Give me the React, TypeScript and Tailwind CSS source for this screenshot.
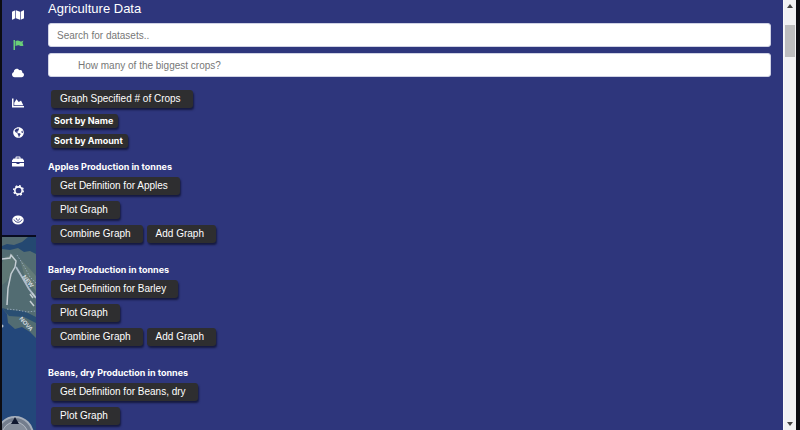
import { FaMap, FaCloud, FaChartArea, FaGlobeAmericas } from "react-icons/fa";
import type { ReactNode } from "react";

function FlagIcon() {
  return (
    <svg viewBox="0 0 22 22" className="size-[11px]" fill="currentColor">
      <path d="M1 2H4V22H1Z" />
      <path d="M5 4C8 2 12 3 14 4.500S18 5 21 3L19 8 21 13C18 15 15 14 13 13S9 12 5 14Z" />
    </svg>
  );
}

function BriefcaseIcon() {
  return (
    <svg viewBox="0 0 24 22" className="h-[11px] w-3" fill="currentColor">
      <path fillRule="evenodd" d="M7 5V3Q7 1 9 1H15Q17 1 17 3V5H21L24 9V12H0V9L3 5ZM9 5H15V3H9Z" />
      <path d="M0 14H9V16H15V14H24V20Q24 21 23 21H1Q0 21 0 20Z" />
    </svg>
  );
}

function GearIcon() {
  return (
    <svg viewBox="0 0 24 24" className="size-[11px]" fill="none" stroke="currentColor">
      <circle cx="12" cy="12" r="8" strokeWidth="3.500" />
      <circle cx="12" cy="12" r="10.5" strokeWidth="3" strokeDasharray="4.1 4.147" />
    </svg>
  );
}

function EyeIcon() {
  return (
    <svg viewBox="0 0 24 20" className="h-2.5 w-3" fill="none" stroke="currentColor">
      <ellipse cx="12" cy="10" rx="11.500" ry="9" fill="currentColor" stroke="none" />
      <path d="M4 9C6 13 9 14.500 12 14.500S18 13 20 9" stroke="#2e367c" strokeWidth="1.800" />
      <path d="M8.500 6C8.500 9 10 10.500 12 10.500S15 9 15 7" stroke="#2e367c" strokeWidth="1.600" />
    </svg>
  );
}

const navItems: { label: string; icon: ReactNode; active?: boolean }[] = [
  { label: "Map", icon: <FaMap className="size-3" /> },
  { label: "Flags", icon: <FlagIcon />, active: true },
  { label: "Weather", icon: <FaCloud className="size-3" /> },
  { label: "Charts", icon: <FaChartArea className="size-3" /> },
  { label: "World", icon: <FaGlobeAmericas className="size-[11px]" /> },
  { label: "Projects", icon: <BriefcaseIcon /> },
  { label: "Settings", icon: <GearIcon /> },
  { label: "View", icon: <EyeIcon /> },
];

function MapPreview() {
  return (
    <svg viewBox="0 0 34 193" preserveAspectRatio="xMidYMin slice" className="min-h-0 w-full flex-1">
      <rect width="34" height="193" fill="#23477a" />
      <path d="M0 0H34V101L28 95 20 90 13 92 6 86 5 77 0 71Z" fill="#526c72" />
      <path d="M0 0H34V17L28 14 22 15 16 11 8 13 0 12Z" fill="#244871" />
      <path d="M0 0H26L20 5 12 8 5 7 0 9Z" fill="#536a70" />
      <path d="M3 20L11 17 13 25 9 38 4 45 0 48V26Z" fill="#5e7775" />
      <path d="M18 22L28 32 34 39V54L23 41Z" fill="#647b78" />
      <path d="M0 71L8 73 22 74 34 80V86L22 80 7 79Z" fill="#294e73" />
      <path d="M0 22L8 21 9 18 14 24 13 30 9 37 6 51 5 68" fill="none" stroke="#c4cdd3" strokeWidth="1.500" />
      <path d="M14 30L20 40 27 52 34 61" fill="none" stroke="#aebcc9" strokeWidth="1.800" />
      <path d="M15 18L22 29 28 40 34 46M5 72L15 73 25 75 34 74" fill="none" stroke="#8fa3b7" strokeDasharray="1.500 1.500" />
      <g fill="#d5dce2" fontFamily="Liberation Sans, Arial, sans-serif" fontSize="6" fontWeight="700">
        <text x="20" y="40" transform="rotate(52 20 40)">NEW</text>
        <text x="17" y="82" transform="rotate(48 17 82)">NOVA</text>
      </g>
      <path d="M28 57L31 61M30 56L33 60M28 64L32 69" stroke="#c4cdd3" strokeWidth="1.500" />
      <circle cx="0" cy="89" r="1.500" fill="#b7c4d3" />
      <circle cx="13" cy="198" r="18" fill="#737d8d" stroke="#a6afbc" strokeWidth="2" />
      <circle cx="13" cy="198" r="13" fill="#858e9c" stroke="#b1b8c3" />
      <path d="M13 180L9 187H17Z" fill="#10182f" />
    </svg>
  );
}

function ActionButton({ children }: { children: ReactNode }) {
  return (
    <button className="h-[18px] rounded-[3px] bg-[#2e2e30] pr-3 pl-[9px] text-[10px] leading-[18px] whitespace-nowrap text-white shadow-[1px_2px_2px_#161a40]">
      {children}
    </button>
  );
}

function SortButton({ children }: { children: ReactNode }) {
  return (
    <button className="h-[14px] rounded-[3px] bg-[#2e2e30] pr-[5px] pl-[3px] text-[9px] leading-[14px] font-bold whitespace-nowrap text-white shadow-[1px_2px_2px_#161a40] font-['Inter','Liberation_Sans',sans-serif]">
      {children}
    </button>
  );
}

function Crop({ name }: { name: string }) {
  return (
    <section className="h-[103px] shrink-0">
      <h2 className="mb-1 text-[9px] leading-3 font-bold text-white font-['Inter','Liberation_Sans',sans-serif]">
        {name} Production in tonnes
      </h2>
      <div className="flex flex-col items-start gap-1.5 pl-[3px]">
        <ActionButton>Get Definition for {name}</ActionButton>
        <ActionButton>Plot Graph</ActionButton>
        <div className="flex gap-1">
          <ActionButton>Combine Graph</ActionButton>
          <ActionButton>Add Graph</ActionButton>
        </div>
      </div>
    </section>
  );
}

const fieldClass =
  "block h-6 w-full rounded-[3px] border border-[#cfd2e4] bg-white text-[10px] text-[#555] placeholder:text-[#777] placeholder:opacity-100";

export default function App() {
  return (
    <div className="flex h-screen overflow-hidden bg-[#0c0c12] px-0.5 font-['Liberation_Sans',Arial,sans-serif]">
      <aside className="flex w-[34px] shrink-0 flex-col bg-[#2e367c]">
        <nav className="flex h-[235px] shrink-0 flex-col pr-0.5">
          {navItems.map((item) => (
            <button
              key={item.label}
              aria-label={item.label}
              className={`flex min-h-0 w-full flex-1 items-center justify-center ${item.active ? "text-[#69cf78]" : "text-white"}`}
            >
              {item.icon}
            </button>
          ))}
        </nav>
        <div className="h-0.5 shrink-0 bg-[#080b20]" />
        <MapPreview />
      </aside>

      <main className="min-w-0 flex-1 overflow-hidden bg-[#2e367c] px-3">
        <h1 className="mb-[5px] text-[13px] leading-[18px] text-white">Agriculture Data</h1>
        <div className="flex flex-col gap-1.5">
          <input aria-label="Search for datasets" placeholder="Search for datasets.." className={`${fieldClass} px-2`} />
          <input aria-label="Number of crops" placeholder="How many of the biggest crops?" className={`${fieldClass} px-[29px]`} />
        </div>
        <div className="mt-[13px] mb-[13px] flex flex-col items-start gap-1.5 pl-[3px]">
          <ActionButton>Graph Specified # of Crops</ActionButton>
          <SortButton>Sort by Name</SortButton>
          <SortButton>Sort by Amount</SortButton>
        </div>
        <Crop name="Apples" />
        <Crop name="Barley" />
        <Crop name="Beans, dry" />
      </main>

      <div className="flex w-[13px] shrink-0 flex-col items-center justify-between border-l border-[#fafafa] bg-[#f1f1f3] py-1">
        <div className="flex flex-col items-center gap-[17px]">
          <svg viewBox="0 0 6 4" className="h-1 w-1.5" fill="#444"><path d="M3 0L6 4H0Z" /></svg>
          <div className="h-8 w-2.5 bg-[#bdbdbf]" />
        </div>
        <svg viewBox="0 0 6 4" className="h-1 w-1.5" fill="#444"><path d="M0 0H6L3 4Z" /></svg>
      </div>
      <div className="w-0.5 shrink-0 bg-[#0c0c12]" />
    </div>
  );
}
